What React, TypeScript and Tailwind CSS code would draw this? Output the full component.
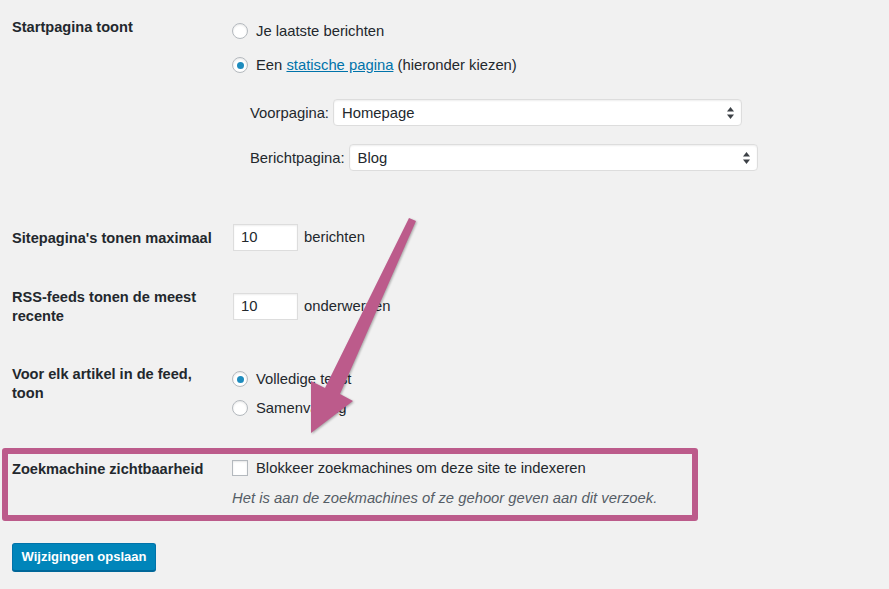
import React from "react";

const font = { fontFamily: '"Liberation Sans", Arial, sans-serif' };

function Radio({ checked }: { checked?: boolean }) {
  return (
    <span className="flex h-4 w-4 shrink-0 items-center justify-center rounded-full border border-[#b4b9be] bg-white shadow-[inset_0_1px_2px_rgba(0,0,0,0.1)]">
      {checked && <span className="h-[7px] w-[7px] rounded-full bg-[#1e8cbe]" />}
    </span>
  );
}

function SelectBox({ value, width }: { value: string; width: string }) {
  return (
    <div
      className={`flex h-[27px] ${width} items-center justify-between rounded-[4px] border border-[#dddddd] bg-white pl-2 pr-[6px] shadow-[inset_0_1px_2px_rgba(0,0,0,0.07)]`}
    >
      <span>{value}</span>
      <svg width="9" height="14" viewBox="0 0 9 14" className="text-[#3c4146]">
        <path d="M4.5 1 L8 5.5 L1 5.5 Z" fill="currentColor" />
        <path d="M4.5 13 L8 8.5 L1 8.5 Z" fill="currentColor" />
      </svg>
    </div>
  );
}

function NumberBox({ value }: { value: string }) {
  return (
    <div className="flex h-[27px] w-[65px] items-center border border-[#dddddd] bg-white pl-[7px] shadow-[inset_0_1px_2px_rgba(0,0,0,0.07)]">
      {value}
    </div>
  );
}

export default function App() {
  return (
    <div
      className="relative h-[589px] w-[889px] overflow-hidden bg-[#f1f1f1] text-[14.8px] text-[#23282d]"
      style={font}
    >
      {/* Startpagina */}
      <div className="flex pl-3">
        <div className="w-[220px] pt-[17px] text-[14.6px] font-bold leading-[20px]">Startpagina toont</div>
        <div className="pt-[21px] leading-[20px]">
          <div className="flex h-5 items-center gap-2">
            <Radio />
            <span>Je laatste berichten</span>
          </div>
          <div className="mt-[14px] flex h-5 items-center gap-2">
            <Radio checked />
            <span>
              Een <span className="text-[#0073aa] underline">statische pagina</span> (hieronder kiezen)
            </span>
          </div>
          <div className="mt-6 flex items-center gap-[4px] pl-[18px]">
            <span>Voorpagina:</span>
            <SelectBox value="Homepage" width="w-[409px]" />
          </div>
          <div className="mt-[18px] flex items-center gap-[4px] pl-[18px]">
            <span>Berichtpagina:</span>
            <SelectBox value="Blog" width="w-[409px]" />
          </div>
        </div>
      </div>

      {/* Sitepagina's */}
      <div className="flex pl-3">
        <div className="w-[221px] pt-[57px] text-[14.6px] font-bold leading-[20px]">Sitepagina's tonen maximaal</div>
        <div className="flex items-center gap-[6px] pt-[53px]">
          <NumberBox value="10" />
          <span>berichten</span>
        </div>
      </div>

      {/* RSS */}
      <div className="flex pl-3">
        <div className="w-[221px] pt-[37px] text-[14.6px] font-bold leading-[19px]">
          RSS-feeds tonen de meest
          <br />
          recente
        </div>
        <div className="flex items-start gap-[6px] pt-[42px]">
          <NumberBox value="10" />
          <span className="leading-[27px]">onderwerpen</span>
        </div>
      </div>

      {/* Feed */}
      <div className="flex pl-3">
        <div className="w-[220px] pt-[39px] text-[14.6px] font-bold leading-[19px]">
          Voor elk artikel in de feed,
          <br />
          toon
        </div>
        <div className="pt-[43px] leading-[20px]">
          <div className="flex h-5 items-center gap-2">
            <Radio checked />
            <span>Volledige tekst</span>
          </div>
          <div className="mt-[9px] flex h-5 items-center gap-2">
            <Radio />
            <span>Samenvatting</span>
          </div>
        </div>
      </div>

      {/* Zoekmachine */}
      <div className="ml-[2px] mt-[30px] flex w-[696px] rounded-[3px] border-[6px] border-[#bc5b8b] pb-[7px] pl-1">
        <div className="w-[220px] pt-[5px] text-[14.6px] font-bold leading-[20px]">Zoekmachine zichtbaarheid</div>
        <div className="pt-[4px] leading-[20px]">
          <div className="flex h-5 items-center gap-2">
            <span className="h-4 w-4 shrink-0 border border-[#b4b9be] bg-white shadow-[inset_0_1px_2px_rgba(0,0,0,0.1)]" />
            <span>Blokkeer zoekmachines om deze site te indexeren</span>
          </div>
          <div className="mt-[10px] italic text-[#555d66]">
            Het is aan de zoekmachines of ze gehoor geven aan dit verzoek.
          </div>
        </div>
      </div>

      {/* Button */}
      <div className="pl-3 pt-[22px]">
        <button
          type="button"
          className="h-[28px] w-[144px] rounded-[3px] border border-[#0073aa] border-b-[#006799] bg-[#0085ba] text-[13px] font-bold text-white shadow-[0_1px_0_#006799]"
        >
          Wijzigingen opslaan
        </button>
      </div>

      {/* Arrow annotation */}
      <svg
        className="pointer-events-none absolute left-0 top-0 drop-shadow-[1px_1px_1px_rgba(0,0,0,0.3)]"
        width="889"
        height="589"
        viewBox="0 0 889 589"
      >
        <polygon
          points="409,218 416,221 340,394 353,401 311,433 311,381 325,388"
          fill="#bc5b8b"
          strokeLinejoin="round"
        />
      </svg>
    </div>
  );
}
